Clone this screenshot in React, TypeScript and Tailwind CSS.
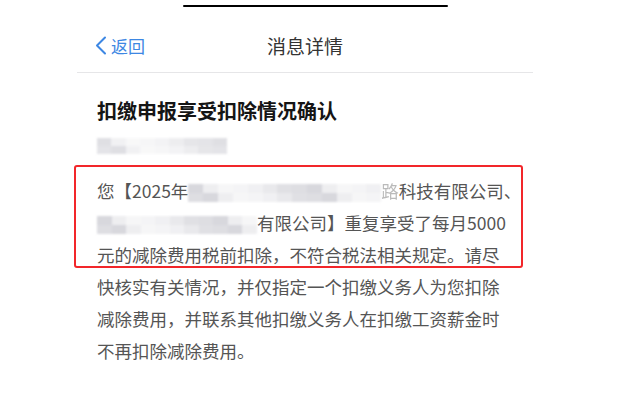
import { ReactNode } from "react";

const font = { fontFamily: '"Noto Sans CJK SC", "Noto Sans", sans-serif' };

// mosaic cells used to hide personal info, light to dark greys
const shades = [
  "bg-[#e9e9ec]",
  "bg-[#d6d6db]",
  "bg-[#f1f1f3]",
  "bg-[#cbcbd2]",
  "bg-[#e2e2e6]",
  "bg-[#f4f4f5]",
  "bg-[#d3d3d9]",
  "bg-[#ececef]",
];

function Mosaic({ cells, className }: { cells: number; className: string }) {
  return (
    <span className={`inline-flex flex-col align-middle overflow-hidden blur-[1px] ${className}`}>
      {[0, 1].map((row) => (
        <span key={row} className="flex flex-1">
          {Array.from({ length: cells }).map((_, i) => (
            <span key={i} className={`flex-1 ${shades[(i * 5 + row * 3 + 3) % shades.length]}`} />
          ))}
        </span>
      ))}
    </span>
  );
}

function Line({ children }: { children: ReactNode }) {
  return <div className="h-[32px] leading-[32px] whitespace-nowrap">{children}</div>;
}

export default function App() {
  return (
    <div className="w-[625px] h-[411px] bg-white overflow-hidden" style={font}>
      {/* top edge of the phone frame */}
      <div className="pt-[5px] pl-[183px]">
        <div className="w-[265px] h-[2px] rounded-full bg-black" />
      </div>

      {/* nav bar */}
      <div className="ml-[77px] w-[456px] h-[66px] border-b border-[#e6e6e8] relative flex items-center justify-center">
        <div className="absolute left-[17px] top-[29px] flex items-center gap-[4px] text-[#3d87e3]">
          <svg width="13" height="19" viewBox="0 0 13 19" fill="none">
            <path d="M11 1.5L3 9.5L11 17.5" stroke="currentColor" strokeWidth="2" strokeLinecap="round" strokeLinejoin="round" />
          </svg>
          <span className="text-[17px] leading-none">返回</span>
        </div>
        <span className="mt-[12px] text-[19px] leading-none text-[#333]">消息详情</span>
      </div>

      {/* message */}
      <div className="pl-[97px] pt-[26px]">
        <h1 className="text-[20px] font-bold leading-[24px] text-[#151515]">扣缴申报享受扣除情况确认</h1>
        <div className="mt-[8px] h-[16px]">
          <Mosaic cells={9} className="w-[130px] h-[16px] opacity-60" />
        </div>

        <div className="relative mt-[28px] text-[17.5px] text-[#555]">
          <Line>
            您【2025年
            <Mosaic cells={13} className="w-[193px] h-[18px] opacity-75" />
            <span className="opacity-40">路</span>科技有限公司、
          </Line>
          <Line>
            <Mosaic cells={11} className="w-[160px] h-[18px] opacity-75" />
            有限公司】重复享受了每月5000
          </Line>
          <Line>元的减除费用税前扣除，不符合税法相关规定。请尽</Line>
          <Line>快核实有关情况，并仅指定一个扣缴义务人为您扣除</Line>
          <Line>减除费用，并联系其他扣缴义务人在扣缴工资薪金时</Line>
          <Line>不再扣除减除费用。</Line>

          {/* red annotation drawn over the first three lines */}
          <div className="absolute left-[-23px] top-[-10px] w-[449px] h-[103px] border-2 border-[#f2262a] rounded-[3px] pointer-events-none" />
        </div>
      </div>
    </div>
  );
}
